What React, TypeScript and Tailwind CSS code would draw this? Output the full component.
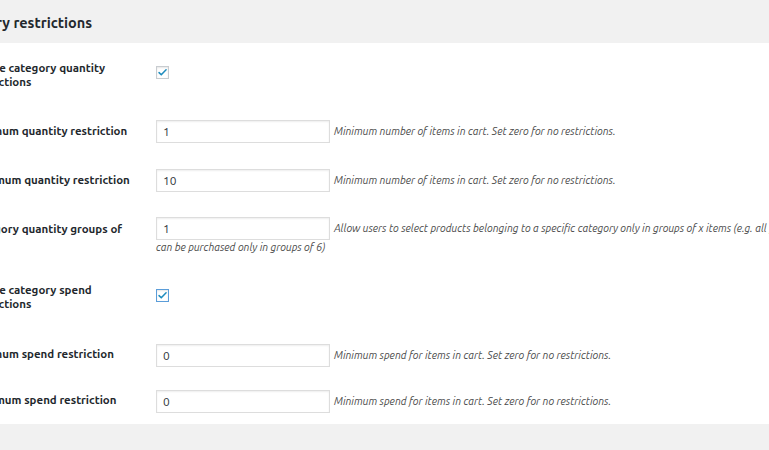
import React from "react";

const font = "font-['Ubuntu','Lato','Liberation_Sans',sans-serif]";

function Check({ focused }: { focused?: boolean }) {
  return (
    <span
      className={`grid size-[13px] place-items-center border bg-white shadow-[inset_0_1px_2px_rgba(0,0,0,0.1)] ${
        focused ? "border-[#5b9dd9]" : "border-[#c8ccd0]"
      }`}
    >
      <svg viewBox="0 0 16 16" className="size-[11px]" aria-hidden="true">
        <path d="M3 8.2l3.2 3.2L13.2 4" fill="none" stroke="#1e8cbe" strokeWidth="2.2" strokeLinecap="round" strokeLinejoin="round" />
      </svg>
    </span>
  );
}

function Field({ value }: { value: string }) {
  return (
    <span className="inline-flex h-[23px] w-[174px] items-center border border-[#ddd] bg-white px-[6px] align-middle text-[12px] text-[#32373c] shadow-[inset_0_1px_2px_rgba(0,0,0,0.07)]">
      {value}
    </span>
  );
}

function Desc({ children }: { children: React.ReactNode }) {
  return <span className="ml-[4px] align-middle text-[10.5px] italic text-[#4a4a4a]">{children}</span>;
}

function Row({
  label,
  height,
  thTop,
  tdTop,
  children,
}: {
  label: React.ReactNode;
  height: number;
  thTop: string;
  tdTop: string;
  children: React.ReactNode;
}) {
  return (
    <div className="flex" style={{ height }}>
      <div className={`w-[177px] shrink-0 pr-[10px] text-[11.5px] leading-[14px] font-bold text-[#23282d] ${thTop}`}>{label}</div>
      <div className={`flex-1 pl-[10px] ${tdTop}`}>{children}</div>
    </div>
  );
}

export default function App() {
  return (
    <div className={`h-[450px] w-full overflow-hidden bg-[#f1f1f1] ${font}`}>
      <div className="flex h-[43px] items-center pt-[3px]">
        <h2 className="-ml-[53px] whitespace-nowrap text-[14.5px] font-bold text-[#23282d]">Category restrictions</h2>
      </div>
      <div className="bg-white">
        <div className="-ml-[31px] w-[1200px]">
          <Row label="Enable category quantity restrictions" height={60} thTop="pt-[18px]" tdTop="pt-[23px]">
            <Check />
          </Row>
          <Row label="Minimum quantity restriction" height={49} thTop="pt-[21px]" tdTop="pt-[15px]">
            <Field value="1" />
            <Desc>Minimum number of items in cart. Set zero for no restrictions.</Desc>
          </Row>
          <Row label="Maximum quantity restriction" height={49} thTop="pt-[21px]" tdTop="pt-[15px]">
            <Field value="10" />
            <Desc>Minimum number of items in cart. Set zero for no restrictions.</Desc>
          </Row>
          <Row
            label={
              <>
                Category quantity groups of
                <br />x
              </>
            }
            height={64}
            thTop="pt-[21px]"
            tdTop="pt-[15px]"
          >
            <div className="whitespace-nowrap leading-[23px]">
              <Field value="1" />
              <Desc>
                Allow users to select products belonging to a specific category only in groups of x items (e.g. all products in this category
              </Desc>
            </div>
            <div className="text-[10.5px] leading-[14px] italic text-[#4a4a4a]">can be purchased only in groups of 6)</div>
          </Row>
          <Row label="Enable category spend restrictions" height={62} thTop="pt-[18px]" tdTop="pt-[24px]">
            <Check focused />
          </Row>
          <Row label="Minimum spend restriction" height={47} thTop="pt-[20px]" tdTop="pt-[15px]">
            <Field value="0" />
            <Desc>Minimum spend for items in cart. Set zero for no restrictions.</Desc>
          </Row>
          <Row label="Maximum spend restriction" height={50} thTop="pt-[19px]" tdTop="pt-[14px]">
            <Field value="0" />
            <Desc>Minimum spend for items in cart. Set zero for no restrictions.</Desc>
          </Row>
        </div>
      </div>
    </div>
  );
}
